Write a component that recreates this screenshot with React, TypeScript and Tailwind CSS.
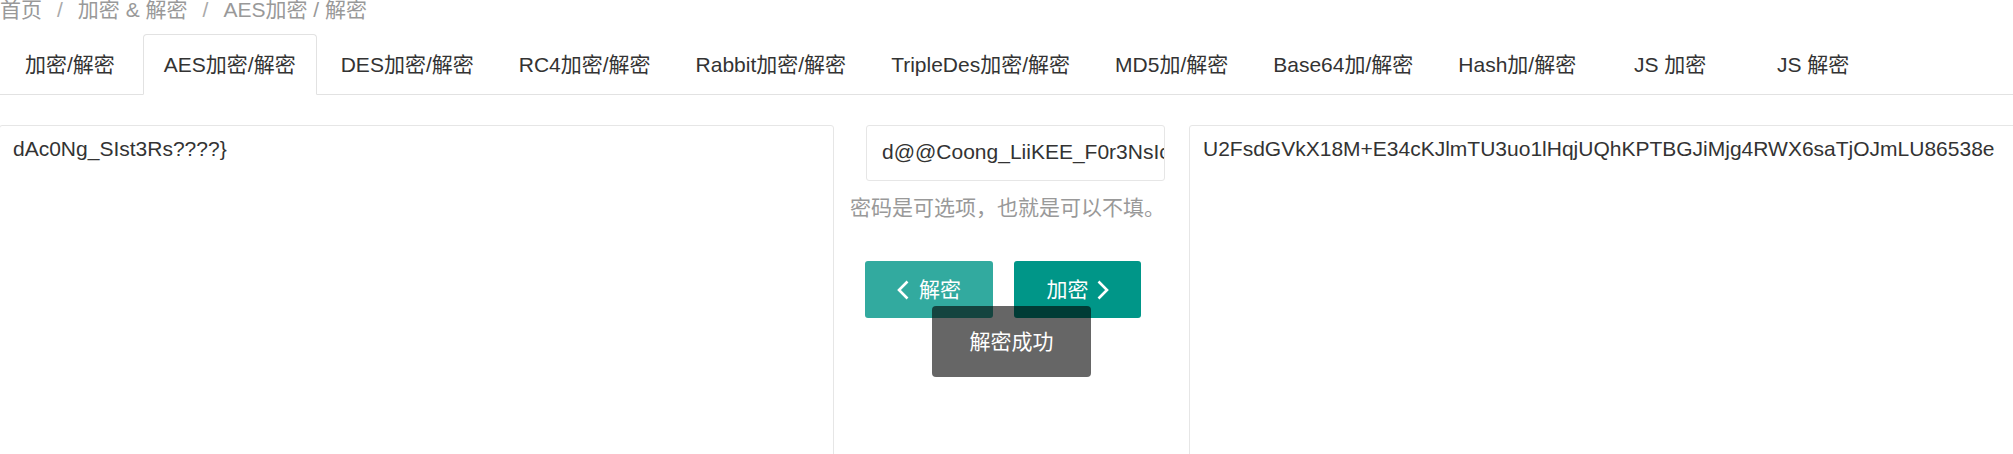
import clsx from "clsx";

const tabs = [
  { label: "加密/解密", first: true },
  { label: "AES加密/解密", active: true },
  { label: "DES加密/解密" },
  { label: "RC4加密/解密" },
  { label: "Rabbit加密/解密" },
  { label: "TripleDes加密/解密" },
  { label: "MD5加/解密" },
  { label: "Base64加/解密" },
  { label: "Hash加/解密" },
  { label: "JS 加密", wide: true },
  { label: "JS 解密", wide: true },
];

function Chevron({ dir }: { dir: "left" | "right" }) {
  return (
    <svg width="12" height="20" viewBox="0 0 12 20" fill="none">
      <polyline
        points={dir === "left" ? "10.5,1.5 2,10 10.5,18.5" : "1.5,1.5 10,10 1.5,18.5"}
        stroke="white"
        strokeWidth="2.6"
      />
    </svg>
  );
}

export default function App() {
  return (
    <div className="w-[2013px] h-[454px] overflow-hidden bg-white text-[21px] font-['Liberation_Sans','Noto_Sans_CJK_SC',sans-serif]">
      {/* breadcrumb, scrolled partly off the top */}
      <div className="h-[35px]">
        <div className="-mt-[1px] flex whitespace-nowrap leading-[21px] text-[#999]">
          <span>首页</span>
          <span className="mx-[15px] text-[#aaa]">/</span>
          <span>加密 &amp; 解密</span>
          <span className="mx-[15px] text-[#aaa]">/</span>
          <span>AES加密 / 解密</span>
        </div>
      </div>

      <ul className="flex border-b border-[#e2e2e2] pl-[4px]">
        {tabs.map((t) => (
          <li
            key={t.label}
            className={clsx(
              "-mb-px flex h-[61px] shrink-0 items-center whitespace-nowrap rounded-t-[4px] border text-[#333]",
              t.first ? "mr-[7px]" : "mr-[3px]",
              t.active ? "border-[#e2e2e2] border-b-white bg-white" : "border-transparent",
              t.wide ? "w-[140px] justify-center" : "px-[20px]"
            )}
          >
            {t.label}
          </li>
        ))}
      </ul>

      <div className="mt-[30px] -ml-px flex">
        <textarea
          readOnly
          value="dAc0Ng_SIst3Rs????}"
          className="h-[340px] w-[835px] shrink-0 resize-none rounded-[3px] border border-[#e6e6e6] px-[13px] pt-[8px] leading-[30px] text-[#333] outline-none"
        />

        <div className="relative ml-[16px] flex w-[315px] shrink-0 flex-col">
          <input
            readOnly
            value="d@@Coong_LiiKEE_F0r3NsIcs"
            className="ml-[16px] h-[56px] w-[299px] rounded-[3px] border border-[#e6e6e6] pl-[15px] pb-[2px] text-[#333] outline-none"
          />
          <p className="mt-[12px] whitespace-nowrap leading-[30px] text-[#999]">
            密码是可选项，也就是可以不填。
          </p>
          <div className="mt-[38px] ml-[15px] flex gap-[21px]">
            <button className="flex h-[57px] w-[128px] items-center justify-center gap-[10px] rounded-[3px] bg-[#009688] text-white opacity-80">
              <Chevron dir="left" />
              <span>解密</span>
            </button>
            <button className="flex h-[57px] w-[127px] items-center justify-center gap-[8px] rounded-[3px] bg-[#009688] text-white">
              <span>加密</span>
              <Chevron dir="right" />
            </button>
          </div>

          <div className="absolute left-[82px] top-[181px] flex h-[71px] w-[159px] items-center justify-center rounded-[4px] bg-black/60 text-white">
            解密成功
          </div>
        </div>

        <textarea
          readOnly
          value="U2FsdGVkX18M+E34cKJlmTU3uo1lHqjUQhKPTBGJiMjg4RWX6saTjOJmLU86538e"
          className="ml-[24px] h-[340px] w-[900px] shrink-0 resize-none rounded-[3px] border border-[#e6e6e6] px-[13px] pt-[8px] leading-[30px] text-[#333] outline-none"
        />
      </div>
    </div>
  );
}
